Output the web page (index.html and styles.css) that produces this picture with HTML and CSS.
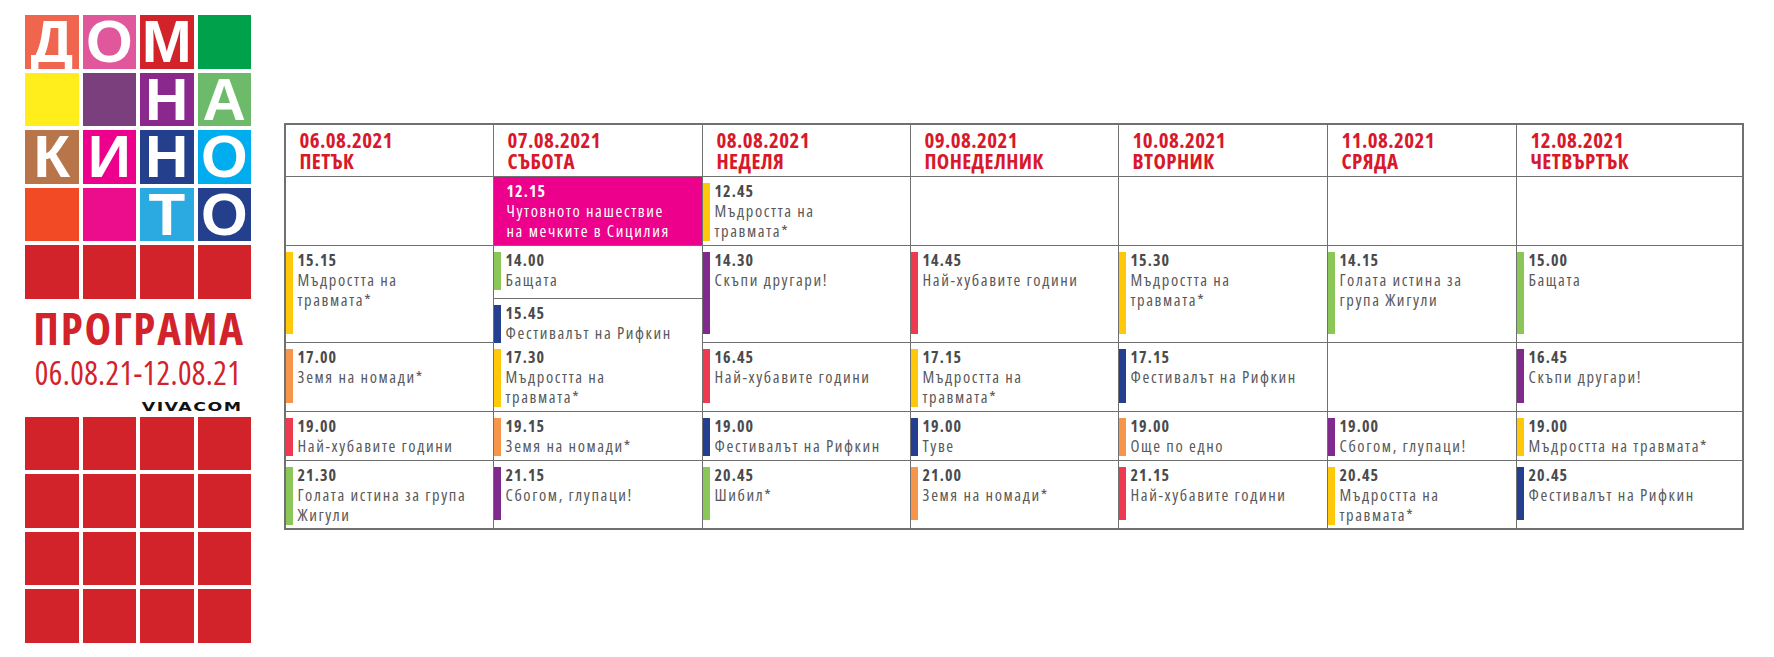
FILE: index.html
```html
<!DOCTYPE html>
<html lang="bg">
<head>
<meta charset="utf-8">
<title>Дом на киното – Програма</title>
<link rel="stylesheet" href="styles.css">
</head>
<body>
<div class="page">
  <aside class="brand">
    <div class="logo">
      <span class="sq coral">Д</span>
      <span class="sq pink">О</span>
      <span class="sq red">М</span>
      <span class="sq green"></span>
      <span class="sq yellow"></span>
      <span class="sq plum"></span>
      <span class="sq purple">Н</span>
      <span class="sq lgreen">А</span>
      <span class="sq brown">К</span>
      <span class="sq magenta">И</span>
      <span class="sq navy">Н</span>
      <span class="sq cyan">О</span>
      <span class="sq orange"></span>
      <span class="sq magenta2"></span>
      <span class="sq sky">Т</span>
      <span class="sq navy">О</span>
      <span class="sq red"></span>
      <span class="sq red"></span>
      <span class="sq red"></span>
      <span class="sq red"></span>
    </div>
    <div class="program">ПРОГРАМА</div>
    <div class="dates">06.08.21-12.08.21</div>
    <div class="sponsor"><span class="sponsor-name">VIVACOM</span></div>
    <div class="logo bottom">
      <span class="sq red"></span><span class="sq red"></span><span class="sq red"></span><span class="sq red"></span>
      <span class="sq red"></span><span class="sq red"></span><span class="sq red"></span><span class="sq red"></span>
      <span class="sq red"></span><span class="sq red"></span><span class="sq red"></span><span class="sq red"></span>
      <span class="sq red"></span><span class="sq red"></span><span class="sq red"></span><span class="sq red"></span>
    </div>
  </aside>

  <main class="schedule">
    <!-- header -->
    <div class="cell head"><div>06.08.2021</div><div>ПЕТЪК</div></div>
    <div class="cell head"><div>07.08.2021</div><div>СЪБОТА</div></div>
    <div class="cell head"><div>08.08.2021</div><div>НЕДЕЛЯ</div></div>
    <div class="cell head"><div>09.08.2021</div><div>ПОНЕДЕЛНИК</div></div>
    <div class="cell head"><div>10.08.2021</div><div>ВТОРНИК</div></div>
    <div class="cell head"><div>11.08.2021</div><div>СРЯДА</div></div>
    <div class="cell head"><div>12.08.2021</div><div>ЧЕТВЪРТЪК</div></div>

    <!-- row 1 -->
    <div class="cell"></div>
    <div class="cell special"><div class="txt"><b>12.15</b><span>Чутовното нашествие<br>на мечките в Сицилия</span></div></div>
    <div class="cell"><div class="ev"><i class="bar b-yellow"></i><div class="txt"><b>12.45</b><span>Мъдростта на<br>травмата*</span></div></div></div>
    <div class="cell"></div>
    <div class="cell"></div>
    <div class="cell"></div>
    <div class="cell"></div>

    <!-- row 2 -->
    <div class="cell"><div class="ev"><i class="bar b-yellow"></i><div class="txt"><b>15.15</b><span>Мъдростта на<br>травмата*</span></div></div></div>
    <div class="cell split">
      <div class="sub"><div class="ev"><i class="bar b-green"></i><div class="txt"><b>14.00</b><span>Бащата</span></div></div></div>
      <div class="sub"><div class="ev"><i class="bar b-blue"></i><div class="txt"><b>15.45</b><span>Фестивалът на Рифкин</span></div></div></div>
    </div>
    <div class="cell"><div class="ev"><i class="bar b-purple"></i><div class="txt"><b>14.30</b><span>Скъпи другари!</span></div></div></div>
    <div class="cell"><div class="ev"><i class="bar b-red"></i><div class="txt"><b>14.45</b><span>Най-хубавите години</span></div></div></div>
    <div class="cell"><div class="ev"><i class="bar b-yellow"></i><div class="txt"><b>15.30</b><span>Мъдростта на<br>травмата*</span></div></div></div>
    <div class="cell"><div class="ev"><i class="bar b-green"></i><div class="txt"><b>14.15</b><span>Голата истина за<br>група Жигули</span></div></div></div>
    <div class="cell"><div class="ev"><i class="bar b-green"></i><div class="txt"><b>15.00</b><span>Бащата</span></div></div></div>

    <!-- row 3 -->
    <div class="cell"><div class="ev"><i class="bar b-orange"></i><div class="txt"><b>17.00</b><span>Земя на номади*</span></div></div></div>
    <div class="cell"><div class="ev"><i class="bar b-yellow"></i><div class="txt"><b>17.30</b><span>Мъдростта на<br>травмата*</span></div></div></div>
    <div class="cell"><div class="ev"><i class="bar b-red"></i><div class="txt"><b>16.45</b><span>Най-хубавите години</span></div></div></div>
    <div class="cell"><div class="ev"><i class="bar b-yellow"></i><div class="txt"><b>17.15</b><span>Мъдростта на<br>травмата*</span></div></div></div>
    <div class="cell"><div class="ev"><i class="bar b-blue"></i><div class="txt"><b>17.15</b><span>Фестивалът на Рифкин</span></div></div></div>
    <div class="cell"></div>
    <div class="cell"><div class="ev"><i class="bar b-purple"></i><div class="txt"><b>16.45</b><span>Скъпи другари!</span></div></div></div>

    <!-- row 4 -->
    <div class="cell"><div class="ev"><i class="bar b-red"></i><div class="txt"><b>19.00</b><span>Най-хубавите години</span></div></div></div>
    <div class="cell"><div class="ev"><i class="bar b-orange"></i><div class="txt"><b>19.15</b><span>Земя на номади*</span></div></div></div>
    <div class="cell"><div class="ev"><i class="bar b-blue"></i><div class="txt"><b>19.00</b><span>Фестивалът на Рифкин</span></div></div></div>
    <div class="cell"><div class="ev"><i class="bar b-blue"></i><div class="txt"><b>19.00</b><span>Туве</span></div></div></div>
    <div class="cell"><div class="ev"><i class="bar b-orange"></i><div class="txt"><b>19.00</b><span>Още по едно</span></div></div></div>
    <div class="cell"><div class="ev"><i class="bar b-purple"></i><div class="txt"><b>19.00</b><span>Сбогом, глупаци!</span></div></div></div>
    <div class="cell"><div class="ev"><i class="bar b-yellow"></i><div class="txt"><b>19.00</b><span>Мъдростта на травмата*</span></div></div></div>

    <!-- row 5 -->
    <div class="cell"><div class="ev"><i class="bar b-green"></i><div class="txt"><b>21.30</b><span>Голата истина за група<br>Жигули</span></div></div></div>
    <div class="cell"><div class="ev"><i class="bar b-purple"></i><div class="txt"><b>21.15</b><span>Сбогом, глупаци!</span></div></div></div>
    <div class="cell"><div class="ev"><i class="bar b-green"></i><div class="txt"><b>20.45</b><span>Шибил*</span></div></div></div>
    <div class="cell"><div class="ev"><i class="bar b-orange"></i><div class="txt"><b>21.00</b><span>Земя на номади*</span></div></div></div>
    <div class="cell"><div class="ev"><i class="bar b-red"></i><div class="txt"><b>21.15</b><span>Най-хубавите години</span></div></div></div>
    <div class="cell"><div class="ev"><i class="bar b-yellow"></i><div class="txt"><b>20.45</b><span>Мъдростта на<br>травмата*</span></div></div></div>
    <div class="cell"><div class="ev"><i class="bar b-blue"></i><div class="txt"><b>20.45</b><span>Фестивалът на Рифкин</span></div></div></div>
  </main>
</div>
</body>
</html>
```

FILE: styles.css
```css
* { box-sizing: border-box; }

html, body {
  margin: 0;
  padding: 0;
  background: #ffffff;
}

body {
  font-family: "Open Sans", "Liberation Sans", sans-serif;
}

.page {
  display: flex;
  align-items: flex-start;
  padding: 15px 0 0 25px;
}

/* ---------- left brand column ---------- */
.brand {
  width: 226px;
  flex: none;
  display: flex;
  flex-direction: column;
}

.logo {
  display: grid;
  grid-template-columns: repeat(4, 1fr);
  grid-auto-rows: 53.5px;
  gap: 4px;
}

.sq {
  display: block;
  color: #ffffff;
  font-family: "Liberation Sans", Arial, sans-serif;
  font-weight: 700;
  font-size: 60px;
  line-height: 53.5px;
  text-align: center;
}

.coral { background: #f0654d; }
.pink { background: #e0589b; }
.red { background: #d2232a; }
.green { background: #00a14b; }
.yellow { background: #ffed1c; }
.plum { background: #7c3f7d; }
.purple { background: #8a288e; }
.lgreen { background: #6dbb6a; }
.brown { background: #b9754a; }
.magenta { background: #ec008c; }
.navy { background: #243f8c; }
.cyan { background: #00aeef; }
.orange { background: #f14a24; }
.magenta2 { background: #ec0d8d; }
.sky { background: #2baae2; }

.program {
  margin-top: 9px;
  padding-left: 2px;
  color: #d2232a;
  font-weight: 700;
  font-size: 45px;
  font-stretch: 75%;
  line-height: 40px;
  letter-spacing: 1.8px;
  text-align: center;
  white-space: nowrap;
}

.dates {
  margin-top: 10px;
  color: #d2232a;
  font-size: 32px;
  font-stretch: 75%;
  line-height: 30px;
  letter-spacing: 0.35px;
  text-align: center;
  white-space: nowrap;
}

.sponsor {
  margin-top: 6.5px;
  height: 12px;
  padding-right: 9px;
  text-align: right;
}

.sponsor-name {
  display: inline-block;
  font-family: "DejaVu Sans", sans-serif;
  font-weight: 700;
  font-size: 12px;
  line-height: 12px;
  color: #111111;
  letter-spacing: 1px;
  transform: scaleX(1.45);
  transform-origin: right center;
}

.logo.bottom {
  margin-top: 10.5px;
}

/* ---------- schedule grid ---------- */
.schedule {
  margin: 108px 0 0 33px;
  display: grid;
  grid-template-columns: 207px 208px 207px 207px 208px 188px 225px;
  grid-template-rows: 51px 68px 96px 68px 48px 67px;
  gap: 1px;
  background: #707070;
  border: 2px solid #707070;
}

.cell {
  background: #ffffff;
  padding: 6px 0 8px 0;
  display: flex;
  flex-direction: column;
  min-width: 0;
}

.cell.head {
  padding: 4.5px 0 0 13.5px;
  color: #d7192b;
  font-weight: 700;
  font-size: 21px;
  font-stretch: 75%;
  line-height: 21px;
  letter-spacing: 0.4px;
}

.ev {
  flex: 1;
  display: flex;
  gap: 4.5px;
}

.bar {
  display: block;
  width: 7px;
  flex: none;
}

.b-yellow { background: #ffc90a; }
.b-orange { background: #f7964a; }
.b-red { background: #ee3a4f; }
.b-green { background: #8bc659; }
.b-blue { background: #243f8f; }
.b-purple { background: #7f2a8c; }

.txt {
  margin-top: -2.2px;
  display: flex;
  flex-direction: column;
  font-size: 16.5px;
  font-stretch: 75%;
  line-height: 20px;
  letter-spacing: 1.6px;
  white-space: nowrap;
}

.txt b {
  font-size: 16px;
  font-weight: 700;
  color: #4a4a4c;
  letter-spacing: 1.1px;
}

.txt span {
  color: #59595b;
}

.cell.special {
  background: #ec008c;
  padding: 3.6px 0 0 12.5px;
}

.cell.special .txt {
  margin-top: 0;
}

.cell.special .txt b,
.cell.special .txt span {
  color: #ffffff;
}

.cell.split {
  padding: 0;
  gap: 1px;
  background: #707070;
}

.sub {
  flex: 1;
  display: flex;
  flex-direction: column;
  background: #ffffff;
  padding: 6px 0 8px 0;
}
```
